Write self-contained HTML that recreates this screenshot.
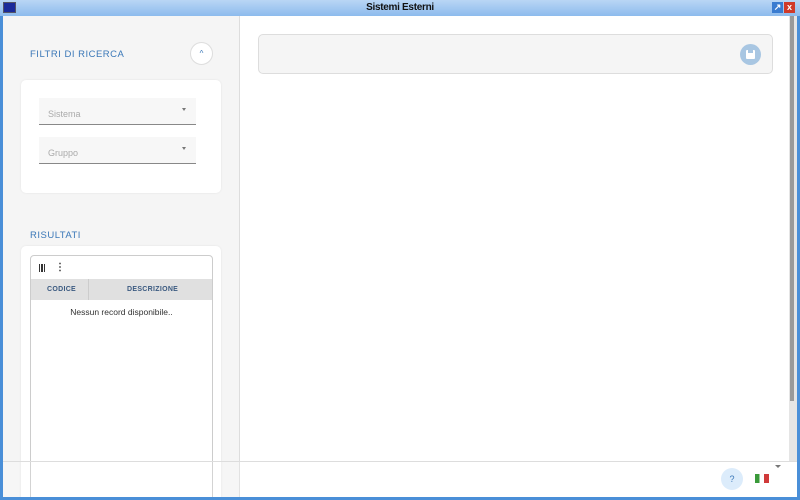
<!DOCTYPE html>
<html><head><meta charset="utf-8"><style>
*{box-sizing:border-box;margin:0;padding:0}
body{width:800px;height:500px;overflow:hidden;background:#4a8fd8;font-family:"Liberation Sans",sans-serif;position:relative}
.title{position:absolute;left:0;top:0;width:800px;height:16px;background:linear-gradient(#b9d6f5,#8dbbed);text-align:center;font-size:10px;font-weight:bold;line-height:16px;color:#111;letter-spacing:-0.3px}
.ico{position:absolute;left:3px;top:2px;width:13px;height:11px;background:#1a2a9a;border:1px solid #556}
.tb{position:absolute;top:2px;width:11px;height:11px;font-size:9px;line-height:11px;text-align:center;color:#fff;font-weight:bold}
.win{position:absolute;left:3px;top:16px;width:794px;height:481px;background:#fff;overflow:hidden}
.left{position:absolute;left:0;top:0;width:237px;height:481px;background:#f5f5f5;border-right:1px solid #ddd}
.h{position:absolute;font-size:9.5px;color:#3b78b8;letter-spacing:0.5px}
.card{position:absolute;background:#fff;border-radius:5px;box-shadow:0 0 2px rgba(0,0,0,.08)}
.sel{position:absolute;left:18px;width:157px;height:27px;background:#f7f7f7;border-bottom:1px solid #888;font-size:9px;color:#aaa;padding:11px 0 0 9px}
.sel:after{content:"";position:absolute;right:10px;top:10px;border:2.5px solid transparent;border-top:3px solid #777}
.foot{position:absolute;left:0;top:445px;width:794px;height:36px;background:rgba(255,255,255,0.15);border-top:1px solid #ddd}
.sb{position:absolute;left:786px;top:0;width:8px;height:445px;background:#e5e5e5}
.sb i{position:absolute;left:1px;top:0;width:4px;height:385px;background:#9a9a9a}
</style></head><body>
<div class="title">Sistemi Esterni</div>
<div class="ico"></div>
<div class="tb" style="left:772px;background:#3a7cd0">↗</div>
<div class="tb" style="left:784px;background:#d03a2a">x</div>
<div class="win">
 <div class="left">
  <div class="h" style="left:27px;top:33px">FILTRI DI RICERCA</div>
  <div style="position:absolute;left:187px;top:26px;width:23px;height:23px;border-radius:50%;background:#fff;border:1px solid #ddd;text-align:center;font-size:8px;line-height:22px;color:#3b78b8">^</div>
  <div class="card" style="left:18px;top:64px;width:200px;height:113px">
   <div class="sel" style="top:18px">Sistema</div>
   <div class="sel" style="top:57px">Gruppo</div>
  </div>
  <div class="h" style="left:27px;top:214px">RISULTATI</div>
  <div class="card" style="left:18px;top:230px;width:200px;height:260px">
   <div style="position:absolute;left:9px;top:9px;width:183px;height:260px;border:1px solid #ccc;border-radius:4px;background:#fff">
    <div style="position:absolute;left:8px;top:8px;width:6px;height:8px;border-left:1.5px solid #333;border-right:1.5px solid #333"><i style="position:absolute;left:1.2px;top:0;width:1.5px;height:8px;background:#333"></i></div>
    <div style="position:absolute;left:24px;top:6px;font-size:10px;font-weight:bold;color:#333">⋮</div>
    <div style="position:absolute;left:0;top:23px;width:181px;height:21px;background:#e0e0e0;font-size:7px;color:#3b5a80;font-weight:bold;letter-spacing:0.3px">
     <span style="position:absolute;left:16px;top:7px">CODICE</span>
     <span style="position:absolute;left:57px;top:0;width:1px;height:21px;background:#ccc"></span>
     <span style="position:absolute;left:96px;top:7px">DESCRIZIONE</span>
    </div>
    <div style="position:absolute;left:0;top:51px;width:181px;text-align:center;font-size:8.5px;color:#333">Nessun record disponibile..</div>
   </div>
  </div>
 </div>
 <div style="position:absolute;left:255px;top:18px;width:515px;height:40px;border:1px solid #ddd;border-radius:5px;background:#f5f5f5">
  <div style="position:absolute;right:11px;top:9px;width:21px;height:21px;border-radius:50%;background:#a8c6e2">
   <div style="position:absolute;left:6px;top:6px;width:9px;height:9px;background:#fff;border-radius:1px"></div>
   <div style="position:absolute;left:8px;top:6px;width:5px;height:3px;background:#a8c6e2"></div>
  </div>
 </div>
 <div class="sb"><i></i></div>
 <div class="foot">
  <div style="position:absolute;left:718px;top:6px;width:22px;height:22px;border-radius:50%;background:#dcecfb;text-align:center;font-size:9px;line-height:22px;color:#3b78b8">?</div>
  <div style="position:absolute;left:752px;top:12px;width:14px;height:9px;background:linear-gradient(90deg,#3a9a3a 33%,#fff 33%,#fff 66%,#d03a3a 66%)"></div>
  <div style="position:absolute;left:772px;top:3px;border:3px solid transparent;border-top:3px solid #777"></div>
 </div>
</div>
</body></html>
